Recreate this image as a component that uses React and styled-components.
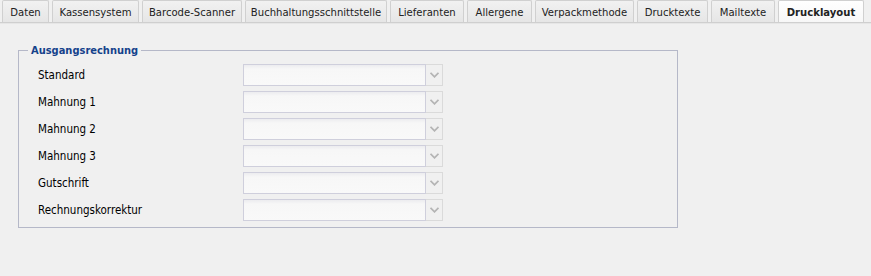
import React from "react";
import styled, { createGlobalStyle } from "styled-components";

const Global = createGlobalStyle`
  html, body { margin: 0; padding: 0; background: #f0f0f0; }
  body { font-family: "DejaVu Sans", "Liberation Sans", sans-serif; font-stretch: condensed; font-size: 11px; color: #000; }
`;

const Page = styled.div`
  width: 871px;
  height: 276px;
  background: #f0f0f0;
  overflow: hidden;
`;

const TabStrip = styled.div`
  display: flex;
  gap: 3px;
  padding-left: 2px;
  height: 22px;
  border-bottom: 1px solid #cfcfcf;
  box-shadow: 0 1px 0 #e6e6e6;
`;

const Tab = styled.div`
  box-sizing: border-box;
  width: ${(p) => p.$w}px;
  height: 22px;
  display: flex;
  align-items: center;
  justify-content: center;
  border: 1px solid #d0d0d0;
  border-bottom: none;
  border-radius: 2px 2px 0 0;
  background: ${(p) =>
    p.$active
      ? "linear-gradient(#ffffff, #f7f7f7)"
      : "linear-gradient(#f1f1f1, #e6e6e6)"};
  color: #222;
  font-weight: ${(p) => (p.$active ? "bold" : "normal")};
  font-size: 11.2px;
  white-space: nowrap;
  padding-top: 1px;
`;

const Content = styled.div`
  padding: 21px 0 0 18px;
`;

const Fieldset = styled.fieldset`
  box-sizing: border-box;
  width: 660px;
  margin: 0;
  padding: 7px 0 6px 19px;
  border: 1px solid #b5b8c8;
  min-inline-size: 0;
`;

const Legend = styled.legend`
  margin-left: -10px;
  padding: 0 3px;
  font-weight: bold;
  color: #15428b;
  font-size: 11px;
  line-height: 13px;
`;

const Rows = styled.div`
  display: flex;
  flex-direction: column;
  gap: 5px;
`;

const Row = styled.div`
  display: flex;
  align-items: center;
  height: 22px;
`;

const Label = styled.div`
  width: 205px;
  font-size: 11.5px;
  color: #000;
`;

const Combo = styled.div`
  display: flex;
  width: 200px;
  height: 22px;
  box-sizing: border-box;
`;

const ComboInput = styled.div`
  flex: 1;
  box-sizing: border-box;
  border: 1px solid #cfcfdc;
  background: linear-gradient(#ececef, #f7f7f7 4px, #f9f9f9);
`;

const Trigger = styled.div`
  width: 17px;
  box-sizing: border-box;
  border: 1px solid #dadada;
  border-left: none;
  background: #f0f0f0;
  display: flex;
  align-items: center;
  justify-content: center;
`;

const Chevron = () => (
  <svg width="9" height="6" viewBox="0 0 9 6">
    <path d="M0.5 0.8 L4.5 4.8 L8.5 0.8" fill="none" stroke="#b4b4b4" strokeWidth="1.8" />
  </svg>
);

const tabs = [
  ["Daten", 47],
  ["Kassensystem", 87],
  ["Barcode-Scanner", 100],
  ["Buchhaltungsschnittstelle", 142],
  ["Lieferanten", 74],
  ["Allergene", 65],
  ["Verpackmethode", 99],
  ["Drucktexte", 71],
  ["Mailtexte", 64],
  ["Drucklayout", 86],
];

const rows = ["Standard", "Mahnung 1", "Mahnung 2", "Mahnung 3", "Gutschrift", "Rechnungskorrektur"];

export default function App() {
  return (
    <Page>
      <Global />
      <TabStrip>
        {tabs.map(([t, w]) => (
          <Tab key={t} $w={w} $active={t === "Drucklayout"}>
            {t}
          </Tab>
        ))}
      </TabStrip>
      <Content>
        <Fieldset>
          <Legend>Ausgangsrechnung</Legend>
          <Rows>
            {rows.map((r) => (
              <Row key={r}>
                <Label>{r}</Label>
                <Combo>
                  <ComboInput />
                  <Trigger>
                    <Chevron />
                  </Trigger>
                </Combo>
              </Row>
            ))}
          </Rows>
        </Fieldset>
      </Content>
    </Page>
  );
}
